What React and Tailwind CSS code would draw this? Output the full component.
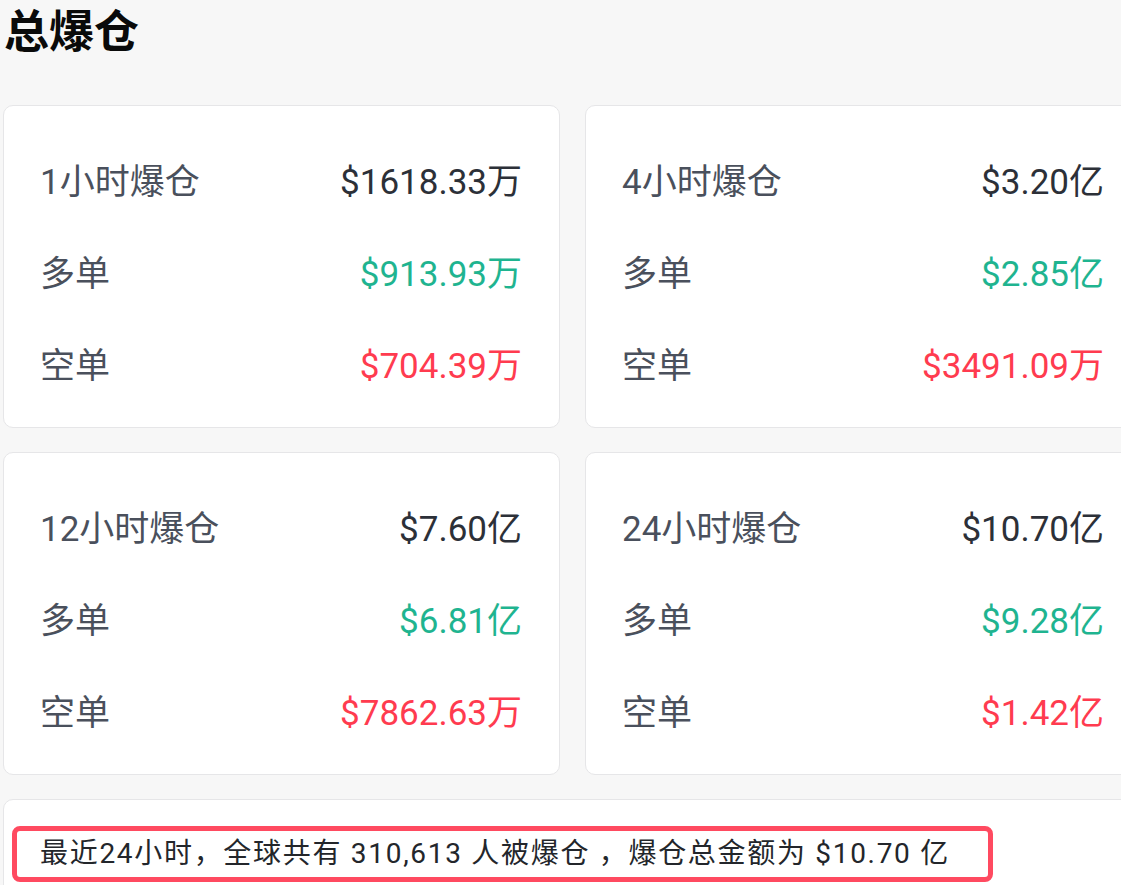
import React from "react";

const font = { fontFamily: '"Roboto", "Noto Sans CJK SC", sans-serif' };

const cards = [
  { label: "1小时爆仓", total: "$1618.33万", long: "$913.93万", short: "$704.39万" },
  { label: "4小时爆仓", total: "$3.20亿", long: "$2.85亿", short: "$3491.09万" },
  { label: "12小时爆仓", total: "$7.60亿", long: "$6.81亿", short: "$7862.63万" },
  { label: "24小时爆仓", total: "$10.70亿", long: "$9.28亿", short: "$1.42亿" },
];

function Row({ label, value, valueClass, labelClass }) {
  return (
    <div className="flex h-[92px] items-center justify-between">
      <span className={`text-[35px] ${labelClass}`}>{label}</span>
      <span className={`text-[35px] ${valueClass}`}>{value}</span>
    </div>
  );
}

function Card({ c }) {
  return (
    <div className="h-[323px] w-[557px] shrink-0 rounded-[10px] border border-[#e6e6e8] bg-white pl-[36px] pr-[37px] pt-[31px]">
      <Row label={c.label} value={c.total} labelClass="text-[#4a505c]" valueClass="text-[#2c3038]" />
      <Row label="多单" value={c.long} labelClass="text-[#4a505c]" valueClass="text-[#1fb490]" />
      <Row label="空单" value={c.short} labelClass="text-[#4a505c]" valueClass="text-[#ff3b4f]" />
    </div>
  );
}

export default function App() {
  return (
    <div className="h-[885px] w-[1121px] overflow-hidden bg-[#f7f7f7] pl-[3px]" style={font}>
      <h1 className="mt-[5px] h-[56px] pl-[1px] text-[45px] font-bold leading-[56px] text-[#0a0a0a]">总爆仓</h1>
      <div className="mt-[44px] flex flex-col gap-[24px]">
        <div className="flex gap-[25px]">
          <Card c={cards[0]} />
          <Card c={cards[1]} />
        </div>
        <div className="flex gap-[25px]">
          <Card c={cards[2]} />
          <Card c={cards[3]} />
        </div>
        <div className="h-[200px] w-[1200px] rounded-[10px] border border-[#e6e6e8] bg-white pl-[8px] pt-[26px]">
          <div className="flex h-[56px] w-[981px] items-center rounded-[8px] border-[5px] border-[#ff4a60] pl-[23px]">
            <span className="text-[28px] tracking-[1.7px] text-[#23262b]">最近24小时，全球共有 310,613 人被爆仓 ，爆仓总金额为 $10.70 亿</span>
          </div>
        </div>
      </div>
    </div>
  );
}
